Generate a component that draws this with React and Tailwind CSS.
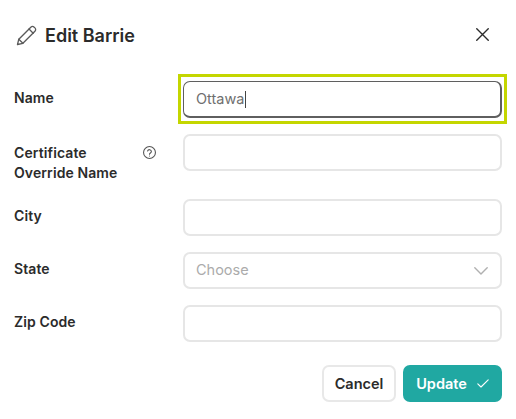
import React from "react";

const font = { fontFamily: '"Inter", "Liberation Sans", sans-serif' };
const inputCls = "w-[319px] h-[37px] rounded-[7px] border-2 border-[#e6e6e6] bg-white px-[11px] text-[14.5px] text-[#8a8a8a] outline-none";
const labelCls = "text-[14px] leading-[20px] font-semibold tracking-[0.1px] text-[#2b2b2b]";

function Pencil() {
  return (
    <svg width="21" height="21" viewBox="0 0 21 21" fill="none" stroke="#5a5a5a" strokeWidth="1.3" strokeLinejoin="round" strokeLinecap="round">
      <path d="M1.5 19.5 L2.8 14.2 L14.8 2.2 C15.8 1.2 17.2 1.2 18.2 2.2 L18.9 2.9 C19.9 3.9 19.9 5.3 18.9 6.3 L6.9 18.3 Z" />
      <path d="M13 4 L17.2 8.2" />
      <path d="M2.8 14.2 L6.9 18.3" />
    </svg>
  );
}

export default function App() {
  return (
    <div style={font} className="w-[516px] h-[419px] bg-white overflow-hidden">
      <div className="flex justify-between pt-[25px] pl-[16px] pr-[27px] h-[73px] items-start">
        <div className="flex items-center gap-[8px]">
          <Pencil />
          <h2 className="text-[18px] leading-[21px] font-semibold text-[#2b2b2b]">Edit Barrie</h2>
        </div>
        <svg width="13" height="13" viewBox="0 0 13 13" fill="none" stroke="#2b2b2b" strokeWidth="1.4" strokeLinecap="round" className="mt-[3px]">
          <path d="M0.75 0.75 L12.25 12.25 M12.25 0.75 L0.75 12.25" />
        </svg>
      </div>

      <div className="pl-[14px] mt-[8px] grid grid-cols-[169px_319px] gap-y-[16px]">
        <label className={`${labelCls} pt-[7px]`}>Name</label>
        <div className="relative h-[37px] w-[319px] rounded-[7px] border border-b-2 border-r-2 border-[#5f5f5f] bg-white pl-[12px] pr-[11px] flex items-center text-[14.5px] text-[#6f6f6f]">
          <span className="absolute top-[-8px] bottom-[-8px] left-[-6px] right-[-7px] border-[3px] border-[#c4d600]"></span>
          <span>Ottawa</span>
          <span className="ml-px h-[17px] w-px bg-[#444]"></span>
        </div>

        <div className="h-[49px] flex items-start pt-[9px]">
          <label className={`${labelCls} w-[129px]`}>Certificate<br />Override Name</label>
          <svg width="13" height="13" viewBox="0 0 24 24" fill="none" stroke="#555" strokeWidth="2" strokeLinecap="round" strokeLinejoin="round" className="mt-[3px]">
            <circle cx="12" cy="12" r="11" />
            <path d="M8.5 9.2a3.6 3.6 0 0 1 7 1c0 2.3-3.5 3-3.5 5" />
            <path d="M12 18.6h.01" />
          </svg>
        </div>
        <input className={inputCls} />

        <label className={`${labelCls} pt-[7px]`}>City</label>
        <input className={inputCls} />

        <label className={`${labelCls} pt-[7px]`}>State</label>
        <div className={`${inputCls} flex items-center justify-between pr-[12px] text-[#ababab]`}>
          <span className="mb-px">Choose</span>
          <svg width="14" height="8" viewBox="0 0 14 8" fill="none" stroke="#b0b0b0" strokeWidth="1.4" strokeLinecap="round" strokeLinejoin="round">
            <path d="M0.8 0.8 L7 7 L13.2 0.8" />
          </svg>
        </div>

        <label className={`${labelCls} pt-[7px]`}>Zip Code</label>
        <input className={inputCls} />
      </div>

      <div className="mt-[23px] w-[502px] flex justify-end gap-[7px]">
        <button className="w-[74px] h-[37px] rounded-[7px] border-2 border-[#e8e8e8] bg-white text-[14.5px] font-semibold text-[#2b2b2b]">Cancel</button>
        <button className="w-[99px] h-[37px] rounded-[7px] bg-[#20a8a2] text-[14.5px] font-semibold text-white flex items-center justify-center gap-[10px]">
          <span>Update</span>
          <svg width="12" height="9" viewBox="0 0 12 9" fill="none" stroke="#fff" strokeWidth="1.1" strokeLinecap="round" strokeLinejoin="round">
            <path d="M0.8 4.8 L4 8 L11.2 0.8" />
          </svg>
        </button>
      </div>
    </div>
  );
}
